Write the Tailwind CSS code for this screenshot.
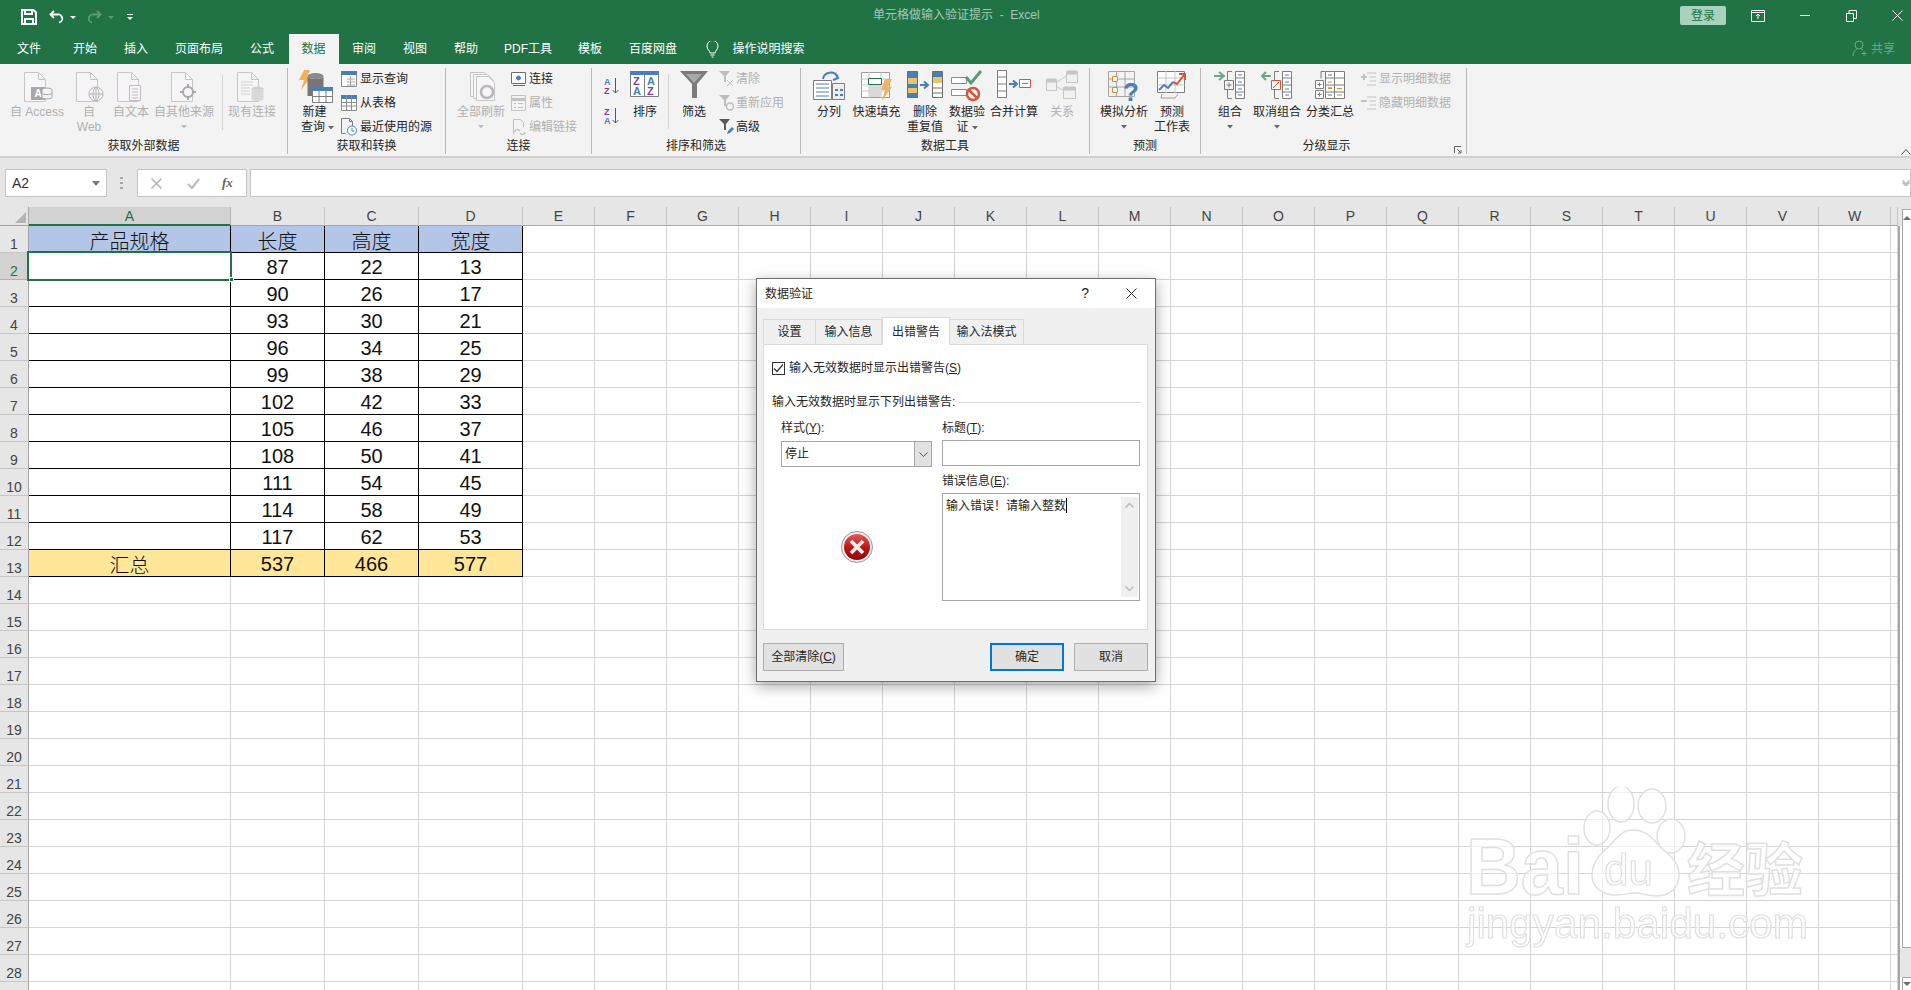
<!DOCTYPE html>
<html lang="zh-CN">
  <head>
    <meta charset="UTF-8" />
    <title>单元格做输入验证提示 - Excel</title>
    <script src="https://cdn.jsdelivr.net/npm/@tailwindcss/browser@4"></script>
  </head>
  <body class="w-[1911px] h-[990px] overflow-hidden bg-white text-[12px] text-[#262626] font-[family-name:'Liberation_Sans','Noto_Sans_CJK_SC',sans-serif]">
    <svg class="hidden">
      <symbol id="doc" viewBox="0 0 24 30"><path d="M.5.5h14l7 7v22H.5z" fill="#f7f5f7" stroke="#c6c6c6"/><path d="M14.5.5v7h7" fill="none" stroke="#c6c6c6"/></symbol>
      <symbol id="caret" viewBox="0 0 6 4"><path d="M0 0h6L3 3.5z" fill="#666"/></symbol>
      <symbol id="caretoff" viewBox="0 0 6 4"><path d="M0 0h6L3 3.5z" fill="#bdbdbd"/></symbol>
    </svg>

    <!-- title bar -->
    <div class="relative h-[34px] bg-[#217346] flex items-center">
      <svg class="ml-[21px] w-[16px] h-[16px]" viewBox="0 0 16 16" fill="none" stroke="#fff" stroke-width="2"><path d="M1 1h11.5L15 3.5V15H1z"/><path d="M4 1v4h7V1M4 15v-5h8v5"/></svg>
      <svg class="ml-[12px] w-[16px] h-[16px]" viewBox="0 0 16 16" fill="none" stroke="#fff" stroke-width="1.8"><path d="M5 2 1.5 5.5 5 9"/><path d="M2 5.5h6.5a4 4 0 0 1 1.5 8"/></svg>
      <div class="ml-[5px] w-0 h-0 border-x-[3px] border-t-[3px] border-x-transparent border-t-white"></div>
      <svg class="ml-[10px] w-[16px] h-[16px]" viewBox="0 0 16 16" fill="none" stroke="#5c9a78" stroke-width="1.8"><path d="M11 2l3.5 3.5L11 9"/><path d="M14 5.5H7.5a4 4 0 0 0-1.500 8"/></svg>
      <div class="ml-[6px] w-0 h-0 border-x-[3px] border-t-[3px] border-x-transparent border-t-[#5c9a78]"></div>
      <svg class="ml-[12px] w-[8px] h-[8px]" viewBox="0 0 8 8"><path d="M1 1h6v1H1zM1 4h6L4 7z" fill="#fff"/></svg>
      <div class="absolute left-[873px] top-[7px] text-[#a5c9b4] whitespace-pre leading-4">单元格做输入验证提示  -  Excel</div>
      <div class="absolute left-[1680px] top-[6px] w-[46px] h-[19px] rounded-[2px] bg-[#a8d2bb] text-[#217346] flex items-center justify-center">登录</div>
      <svg class="absolute left-[1751px] top-[10px] w-[14px] h-[12px]" viewBox="0 0 14 12" fill="none" stroke="#fff"><path d="M.5.5h13v11H.5zM.5 2.500h13M7 9V4.500M5 6l2-2 2 2"/></svg>
      <div class="absolute left-[1800px] top-[15px] w-[10px] h-px bg-white"></div>
      <svg class="absolute left-[1846px] top-[10px] w-[11px] h-[12px]" viewBox="0 0 11 12" fill="none" stroke="#fff"><path d="M.5 3.500h7v8h-7zM3 3.500V.5h7.500v8H7.500"/></svg>
      <svg class="absolute left-[1892px] top-[10px] w-[11px] h-[11px]" viewBox="0 0 11 11" stroke="#fff"><path d="M.5.5l10 10M10.500.5l-10 10"/></svg>
    </div>

    <!-- tabs -->
    <div class="relative h-[30px] bg-[#217346] flex text-white text-[12px]">
      <div class="w-[58px] flex items-center justify-center">文件</div>
      <div class="ml-[1.500px] w-[51px] flex items-center justify-center">开始</div>
      <div class="w-[51px] flex items-center justify-center">插入</div>
      <div class="w-[75px] flex items-center justify-center">页面布局</div>
      <div class="w-[51px] flex items-center justify-center">公式</div>
      <div class="w-[50px] ml-[1px] flex items-center justify-center bg-[#f3f3f3] text-[#217346]">数据</div>
      <div class="w-[51px] flex items-center justify-center">审阅</div>
      <div class="w-[51px] flex items-center justify-center">视图</div>
      <div class="w-[51px] flex items-center justify-center">帮助</div>
      <div class="w-[73px] flex items-center justify-center">PDF工具</div>
      <div class="w-[51px] flex items-center justify-center">模板</div>
      <div class="w-[75px] flex items-center justify-center">百度网盘</div>
      <svg class="ml-[15px] mt-[7px] w-[13px] h-[17px]" viewBox="0 0 13 17" fill="none" stroke="#fff"><path d="M4 12c0-2-3-3.500-3-7a5.500 5.500 0 0 1 11 0c0 3.500-3 5-3 7zM4.500 14h4M5.500 16h2"/></svg>
      <div class="ml-[14px] flex items-center">操作说明搜索</div>
      <svg class="absolute left-[1852px] top-[6px] w-[15px] h-[17px]" viewBox="0 0 15 17" fill="none" stroke="#6ea688"><circle cx="7" cy="5" r="4"/><path d="M1 16c0-4 2-6 4-7M9 9l2 1M12 11v5M9.500 13.500h5"/></svg>
      <div class="absolute left-[1871px] top-[7px] text-[#6ea688] leading-4">共享</div>
    </div>

    <!-- ribbon -->
    <div class="relative h-[94px] bg-[#f3f3f3] border-b-2 border-[#d0d0d0] flex pt-[4px] text-[12px] leading-[15px] whitespace-nowrap">

      <div class="w-[288px] h-[86px] border-r border-[#b9b9b9] pt-[2px] flex flex-col">
        <div class="h-[72px] flex pl-[8px] text-[#b1b1b1]">
          <div class="w-[58px] flex flex-col items-center">
            <div class="h-[35px] w-[32px]"><svg class="w-[32px] h-[32px]" viewBox="0 0 32 32"><use href="#doc" x="3" y="2" width="24" height="30"/><path d="M10 17h14v13H10z" fill="#a8a8a8"/><text x="13.500" y="27" font-size="10" font-weight="700" fill="#fff" font-family="Liberation Sans">A</text><ellipse cx="26" cy="20" rx="5" ry="2" fill="#f3f3f3" stroke="#a8a8a8"/><path d="M21 20v7c0 2.500 10 2.500 10 0v-7" fill="#f3f3f3" stroke="#a8a8a8"/><path d="M21 23c0 2 10 2 10 0" fill="none" stroke="#a8a8a8"/></svg></div>
            <div>自 Access</div>
          </div>
          <div class="w-[46px] flex flex-col items-center">
            <div class="h-[35px] w-[32px]"><svg class="w-[32px] h-[32px]" viewBox="0 0 32 32"><use href="#doc" x="3" y="2" width="24" height="30"/><circle cx="23" cy="24" r="7" fill="#f7f5f7" stroke="#b5b5b5"/><path d="M16 24h14M23 17v14M23 17c-4 3-4 11 0 14M23 17c4 3 4 11 0 14" fill="none" stroke="#b5b5b5"/></svg></div>
            <div class="text-center">自<br />Web</div>
          </div>
          <div class="w-[38px] flex flex-col items-center">
            <div class="h-[35px] w-[32px]"><svg class="w-[32px] h-[32px]" viewBox="0 0 32 32"><use href="#doc" x="2" y="2" width="24" height="30"/><path d="M14.500 15.500h11v15h-11z" fill="#f7f5f7" stroke="#bdbdbd"/><path d="M17 19h6M17 22h6M17 25h6M17 28h6" stroke="#bdbdbd"/></svg></div>
            <div>自文本</div>
          </div>
          <div class="w-[68px] flex flex-col items-center">
            <div class="h-[35px] w-[32px]"><svg class="w-[32px] h-[32px]" viewBox="0 0 32 32"><use href="#doc" x="3" y="2" width="24" height="30"/><circle cx="20" cy="22" r="5" fill="#f7f5f7" stroke="#a8a8a8" stroke-width="2"/><path d="M20 14v4M20 26v4M12 22h4M24 22h4" stroke="#a8a8a8" stroke-width="2"/></svg></div>
            <div>自其他来源</div>
            <svg class="mt-[5px] w-[6px] h-[4px]"><use href="#caretoff"/></svg>
          </div>
          <div class="ml-[4px] mt-[5px] w-px h-[55px] bg-[#d4d4d4]"></div>
          <div class="ml-[5px] w-[48px] flex flex-col items-center">
            <div class="h-[35px] w-[32px]"><svg class="w-[32px] h-[32px]" viewBox="0 0 32 32"><use href="#doc" x="1" y="2" width="24" height="30"/><path d="M5 12h12M5 15h12M5 18h9M5 21h9M5 24h9" stroke="#d0d0d0"/><ellipse cx="21.500" cy="19" rx="6" ry="2.500" fill="#cfcfcf"/><path d="M15.500 19v10c0 2.500 12 2.500 12 0V19" fill="#d9d9d9"/></svg></div>
            <div>现有连接</div>
          </div>
        </div>
        <div class="text-center leading-[15px]">获取外部数据</div>
      </div>

      <div class="w-[158px] h-[86px] border-r border-[#b9b9b9] pt-[2px] flex flex-col">
        <div class="h-[72px] flex">
          <div class="w-[53px] flex flex-col items-center">
            <div class="h-[35px] w-[36px]"><svg class="w-[36px] h-[35px]" viewBox="0 0 36 35"><path d="M7 0h6l-3 7h4L4 20l3-10H2z" fill="#f0b25c"/><ellipse cx="18.500" cy="6" rx="8" ry="3" fill="#8a8a8a"/><path d="M10.500 6v20h16V6c0 4-16 4-16 0z" fill="#767676"/><path d="M15.500 17.500h20v15h-20z" fill="#fff" stroke="#7d7d7d"/><path d="M15 17h21v4H15z" fill="#4a7ebb"/><path d="M15.500 26.500h20M22 21v11M29 21v11" stroke="#7d7d7d"/></svg></div>
            <div>新建</div>
            <div class="flex items-center gap-[3px] ml-[6px]">查询<svg class="w-[6px] h-[4px]"><use href="#caret"/></svg></div>
          </div>
          <div class="flex flex-col gap-2 pt-[1px] text-[#262626]">
            <div class="h-4 flex items-center gap-[3px]"><svg class="w-[16px] h-[16px]" viewBox="0 0 16 16"><path d="M.5.5h15v15H.5z" fill="#fff" stroke="#8c8c8c"/><path d="M0 0h16v4H0z" fill="#4a7ebb"/><path d="M6 8h8M6 11h8M6 14h8M9.500 5v10" stroke="#a6a6a6"/></svg>显示查询</div>
            <div class="h-4 flex items-center gap-[3px]"><svg class="w-[16px] h-[16px]" viewBox="0 0 16 16"><path d="M.5.5h15v15H.5z" fill="#fff" stroke="#8c8c8c"/><path d="M0 0h16v4H0z" fill="#4a7ebb"/><path d="M.5 7.500h15M.5 11h15M5.500 0v16M10.500 0v16" stroke="#8c8c8c"/></svg>从表格</div>
            <div class="h-4 flex items-center gap-[3px]"><svg class="w-[16px] h-[18px]" viewBox="0 0 16 18"><path d="M.5.500h8l3 3V9" fill="none" stroke="#7d7d7d"/><path d="M.5.5v15h4" fill="none" stroke="#7d7d7d"/><path d="M8.500.5v3h3" fill="none" stroke="#7d7d7d"/><circle cx="11" cy="12.500" r="4.500" fill="#fff" stroke="#4a7ebb"/><path d="M11 10v3h2.500" fill="none" stroke="#4a7ebb"/></svg>最近使用的源</div>
          </div>
        </div>
        <div class="text-center leading-[15px]">获取和转换</div>
      </div>

      <div class="w-[146px] h-[86px] border-r border-[#b9b9b9] pt-[2px] flex flex-col">
        <div class="h-[72px] flex pl-[5px]">
          <div class="w-[60px] flex flex-col items-center text-[#b1b1b1]">
            <div class="h-[35px] w-[32px]"><svg class="w-[32px] h-[32px]" viewBox="0 0 32 32" fill="#f7f5f7" stroke="#c6c6c6"><path d="M5.500 2.500h14l6 6v18h-20z"/><path d="M8.500 4.500h14l6 6v18h-20z" /><path d="M11.500 6.500h12l6 6v18h-18z"/><circle cx="22" cy="22" r="6" fill="none" stroke="#b8b8b8" stroke-width="2.500"/></svg></div>
            <div>全部刷新</div>
            <svg class="mt-[5px] w-[6px] h-[4px]"><use href="#caretoff"/></svg>
          </div>
          <div class="flex flex-col gap-2 pt-[1px]">
            <div class="h-4 flex items-center gap-[2px]"><svg class="w-[16px] h-[15px]" viewBox="0 0 16 15" fill="none" stroke="#6d6d6d"><path d="M.5.5h14v11H.5z" fill="#fff"/><path d="M2 13.500h12"/><circle cx="7.500" cy="6" r="2" fill="#4a7ebb" stroke="#4a7ebb"/></svg>连接</div>
            <div class="h-4 flex items-center gap-[2px] text-[#b1b1b1]"><svg class="w-[16px] h-[16px]" viewBox="0 0 16 16" fill="none" stroke="#c2c2c2"><path d="M.5.5h14v15H.5z"/><path d="M.5 4.500h14" stroke-width="3"/><path d="M3 8.500h2M3 12.500h2M7 8.500h5M7 12.500h5"/></svg>属性</div>
            <div class="h-4 flex items-center gap-[2px] text-[#b1b1b1]"><svg class="w-[16px] h-[17px]" viewBox="0 0 16 17" fill="none" stroke="#c2c2c2"><path d="M2.500.5h7l3 3v5M2.500.5v15"/><path d="M4 13c0-3 4-3 5-1M14 13c0 3-4 3-5 1" stroke-width="1.500"/></svg>编辑链接</div>
          </div>
        </div>
        <div class="text-center leading-[15px]">连接</div>
      </div>

      <div class="w-[209px] h-[86px] border-r border-[#b9b9b9] pt-[2px] flex flex-col">
        <div class="h-[72px] flex pl-[12px]">
          <div class="w-[18px] flex flex-col gap-[12px] pt-[7px]">
            <svg class="w-[16px] h-[18px]" viewBox="0 0 16 18"><text x="0" y="8" font-size="9" font-weight="700" fill="#4a7ebb" font-family="Liberation Sans">A</text><text x="0" y="17" font-size="9" font-weight="700" fill="#7a3fa5" font-family="Liberation Sans">Z</text><path d="M11.500 1v15M8.500 13l3 3 3-3" fill="none" stroke="#555"/></svg>
            <svg class="w-[16px] h-[18px]" viewBox="0 0 16 18"><text x="0" y="8" font-size="9" font-weight="700" fill="#7a3fa5" font-family="Liberation Sans">Z</text><text x="0" y="17" font-size="9" font-weight="700" fill="#4a7ebb" font-family="Liberation Sans">A</text><path d="M11.500 1v15M8.500 13l3 3 3-3" fill="none" stroke="#555"/></svg>
          </div>
          <div class="w-[46px] flex flex-col items-center">
            <div class="h-[35px] w-[30px]"><svg class="w-[30px] h-[26px] mt-[1px]" viewBox="0 0 30 26"><path d="M.5.5h28v25H.5z" fill="#fff" stroke="#7d7d7d"/><path d="M0 0h29v4H0z" fill="#4a7ebb"/><path d="M14.500 4v22" stroke="#7d7d7d"/><text x="3" y="14" font-size="11" font-weight="700" fill="#7a3fa5" font-family="Liberation Sans">Z</text><text x="3" y="24" font-size="11" font-weight="700" fill="#4a7ebb" font-family="Liberation Sans">A</text><text x="17" y="14" font-size="11" font-weight="700" fill="#4a7ebb" font-family="Liberation Sans">A</text><text x="17" y="24" font-size="11" font-weight="700" fill="#7a3fa5" font-family="Liberation Sans">Z</text></svg></div>
            <div>排序</div>
          </div>
          <div class="mt-[4px] w-px h-[55px] bg-[#d4d4d4]"></div>
          <div class="w-[50px] flex flex-col items-center">
            <div class="h-[35px] w-[28px]"><svg class="w-[28px] h-[28px] mt-[1px]" viewBox="0 0 28 28"><path d="M0 0h28L17 13v14h-5V13z" fill="#7b7b7b"/><path d="M6 3h16l-8 9z" fill="#a9a9a9"/></svg></div>
            <div>筛选</div>
          </div>
          <div class="flex flex-col gap-2 pt-[1px]">
            <div class="h-4 flex items-center gap-[2px] text-[#b1b1b1]"><svg class="w-[15px] h-[16px]" viewBox="0 0 15 16"><path d="M0 0h11L7 5v6H5V5z" fill="#bdbdbd"/><path d="M8 9l6 6M14 9l-6 6" stroke="#bdbdbd"/></svg>清除</div>
            <div class="h-4 flex items-center gap-[2px] text-[#b1b1b1]"><svg class="w-[15px] h-[16px]" viewBox="0 0 15 16"><path d="M0 0h11L7 5v6H5V5z" fill="#bdbdbd"/><circle cx="11" cy="11.500" r="3.500" fill="none" stroke="#bdbdbd" stroke-width="1.500"/></svg>重新应用</div>
            <div class="h-4 flex items-center gap-[2px]"><svg class="w-[15px] h-[16px]" viewBox="0 0 15 16"><path d="M0 0h11L7 5v6H5V5z" fill="#595959"/><path d="M8 15l1-3 4-4 2 2-4 4z" fill="#4a7ebb"/></svg>高级</div>
          </div>
        </div>
        <div class="text-center leading-[15px]">排序和筛选</div>
      </div>

      <div class="w-[289px] h-[86px] border-r border-[#b9b9b9] pt-[2px] flex flex-col">
        <div class="h-[72px] flex pl-[4px]">
          <div class="w-[48px] flex flex-col items-center">
            <div class="h-[35px] w-[32px]"><svg class="w-[32px] h-[32px]" viewBox="0 0 32 32" fill="none"><path d="M.5 10.500h18v19H.5z" fill="#fff" stroke="#7d7d7d"/><path d="M3 14h13M3 18h13M3 22h13M3 26h13" stroke="#4a7ebb"/><path d="M19.500 13.500h12v16h-12z" fill="#eee" stroke="#7d7d7d"/><path d="M22 20h3M27 20h3M22 25h3M27 25h3" stroke="#4a7ebb" stroke-width="2"/><path d="M10 9c1-7 11-9 15-2M22 3l3 5-5 2" stroke="#4a7ebb" stroke-width="2"/></svg></div>
            <div>分列</div>
          </div>
          <div class="w-[47px] flex flex-col items-center">
            <div class="h-[35px] w-[32px]"><svg class="w-[32px] h-[32px]" viewBox="0 0 32 32" fill="none"><path d="M.5 2.500h28v25H.5z" fill="#fff" stroke="#9d9d9d"/><path d="M.5 9h28M.5 15h28M.5 21h28M8 2v26M20 2v26" stroke="#c6c6c6"/><path d="M7.500 8.500h13v6h-13z" stroke="#217346" fill="#fff"/><path d="M8 15h12v12H8z" fill="#d9d9d9"/><path d="M24 9h7l-4 8h4L21 31l3-11h-4z" fill="#f0b25c"/></svg></div>
            <div>快速填充</div>
          </div>
          <div class="w-[50px] flex flex-col items-center">
            <div class="h-[35px] w-[36px]"><svg class="w-[36px] h-[32px]" viewBox="0 0 36 32"><path d="M.5 1.500h10v26H.5zM25.500 1.500h10v26h-10z" fill="#4a7ebb" stroke="#6d6d6d"/><path d="M1 8h9v6H1zM1 18h9v5H1z" fill="#e9c46a"/><path d="M26 7h9v6h-9z" fill="#e9c46a"/><path d="M26 13h9v14h-9z" fill="#fff"/><path d="M26 18h9M26 23h9" stroke="#6d6d6d"/><path d="M13 15h7M17 11.500l4 3.500-4 3.500" fill="none" stroke="#4a7ebb" stroke-width="2"/></svg></div>
            <div>删除</div>
            <div>重复值</div>
          </div>
          <div class="w-[34px] flex flex-col items-center">
            <div class="h-[35px] w-[32px]"><svg class="w-[32px] h-[32px]" viewBox="0 0 32 32" fill="none"><path d="M.5 7.500h15v6H.5zM.5 19.500h15v6H.5z" fill="#fff" stroke="#8c8c8c"/><path d="M15 7l5 6L30 1" stroke="#5c9a78" stroke-width="3"/><circle cx="22" cy="24" r="6" stroke="#d6573b" stroke-width="2.500" fill="#fff"/><path d="M18 20l8 8" stroke="#d6573b" stroke-width="2.500"/></svg></div>
            <div>数据验</div>
            <div class="flex items-center gap-[3px]">证<svg class="w-[6px] h-[4px]"><use href="#caret"/></svg></div>
          </div>
          <div class="w-[60px] flex flex-col items-center">
            <div class="h-[35px] w-[34px]"><svg class="w-[34px] h-[28px]" viewBox="0 0 34 28" fill="none"><path d="M.5.5h9v27h-9z" fill="#fff" stroke="#7d7d7d"/><path d="M.5 7h9M.5 14h9M.5 21h9" stroke="#7d7d7d"/><path d="M12 14h7M16 10.500l4 3.500-4 3.500" stroke="#4a7ebb" stroke-width="2"/><path d="M22.500 9.500h11v8h-11z" fill="#fff" stroke="#d6573b"/><path d="M25 13.500h6" stroke="#d6573b"/></svg></div>
            <div>合并计算</div>
          </div>
          <div class="w-[36px] flex flex-col items-center text-[#b1b1b1]">
            <div class="h-[35px] w-[32px]"><svg class="w-[32px] h-[29px]" viewBox="0 0 32 29" fill="none" stroke="#c6c6c6"><path d="M.5 9.500h10v11H.5zM20.500 1.500h11v11h-11zM17.500 17.500h12v11h-12z" fill="#f0f0f0"/><path d="M11 12l9-6M11 17l6 3"/><path d="M1 9h9v3H1zM21 1h10v3H21zM18 17h11v3H18z" fill="#c6c6c6"/></svg></div>
            <div>关系</div>
          </div>
        </div>
        <div class="text-center leading-[15px]">数据工具</div>
      </div>

      <div class="w-[111px] h-[86px] border-r border-[#b9b9b9] pt-[2px] flex flex-col">
        <div class="h-[72px] flex pl-[7px]">
          <div class="w-[54px] flex flex-col items-center">
            <div class="h-[35px] w-[32px]"><svg class="w-[32px] h-[32px]" viewBox="0 0 32 32" fill="none"><path d="M.5 1.500h26v25H.5zM.5 9h26M.5 17h26M8.500 1v26M17 1v26" stroke="#a6a6a6" /><path d="M4.500 6.500h5v5h-5zM4.500 17.500h5v5h-5z" stroke="#e08a2e" fill="#fff"/><text x="15" y="31" font-size="26" font-weight="700" fill="#4a7ebb" font-family="Liberation Sans">?</text></svg></div>
            <div>模拟分析</div>
            <svg class="mt-[5px] w-[6px] h-[4px]"><use href="#caret"/></svg>
          </div>
          <div class="w-[42px] flex flex-col items-center">
            <div class="h-[35px] w-[30px]"><svg class="w-[30px] h-[30px]" viewBox="0 0 30 30" fill="none"><path d="M.5 1.500h27v21H.5z" fill="#fff" stroke="#7d7d7d"/><path d="M.5 8h27M.5 15h27M9 1v22M18 1v22" stroke="#c6c6c6"/><path d="M2 20l5-5 4 3 5-6" stroke="#4a7ebb" stroke-width="2"/><path d="M16 12l4 2 7-9M22 4h6v6" stroke="#d6573b" stroke-width="2"/><path d="M5 24l-1 4h14l3-4" stroke="#9d9d9d"/></svg></div>
            <div>预测</div>
            <div>工作表</div>
          </div>
        </div>
        <div class="text-center leading-[15px]">预测</div>
      </div>

      <div class="relative w-[266px] h-[86px] border-r border-[#b9b9b9] pt-[2px] flex flex-col">
        <div class="h-[72px] flex pl-[4px]">
          <div class="w-[50px] flex flex-col items-center">
            <div class="h-[35px] w-[32px]"><svg class="w-[32px] h-[30px]" viewBox="0 0 32 30" fill="none"><path d="M0 6h8M5 2l5 4-5 4" stroke="#6aa88a" stroke-width="2"/><path d="M21.500 1.500h9v27h-9zM21.500 8h9M21.500 15h9M21.500 22h9" stroke="#7d7d7d" fill="#fff"/><path d="M24 5h4M24 12h4M24 19h4M24 25h4" stroke="#4a7ebb"/><path d="M13.500 1.500H18M13.500 1.500v9M13.500 28.500H18M13.500 19v9" stroke="#7d7d7d"/><path d="M10.500 10.500h9v9h-9z" stroke="#7d7d7d"/><path d="M12.500 15h5M15 12.500v5" stroke="#7d7d7d"/></svg></div>
            <div>组合</div>
            <svg class="mt-[5px] w-[6px] h-[4px]"><use href="#caret"/></svg>
          </div>
          <div class="w-[44px] flex flex-col items-center">
            <div class="h-[35px] w-[32px]"><svg class="w-[32px] h-[30px]" viewBox="0 0 32 30" fill="none"><path d="M10 6H2M5 2L1 6l4 4" stroke="#6aa88a" stroke-width="2"/><path d="M21.500 1.500h9v27h-9zM21.500 8h9M21.500 15h9M21.500 22h9" stroke="#7d7d7d" fill="#fff"/><path d="M24 5h4M24 12h4M24 19h4M24 25h4" stroke="#4a7ebb"/><path d="M13.500 1.500H18M13.500 1.500v9M13.500 28.500H18M13.500 19v9" stroke="#7d7d7d"/><path d="M10.500 10.500h9v9h-9z" stroke="#d6573b" fill="#fff"/><path d="M12 18l6-6" stroke="#d6573b"/></svg></div>
            <div>取消组合</div>
            <svg class="mt-[5px] w-[6px] h-[4px]"><use href="#caret"/></svg>
          </div>
          <div class="w-[62px] flex flex-col items-center">
            <div class="h-[35px] w-[30px]"><svg class="w-[30px] h-[30px]" viewBox="0 0 30 30" fill="none"><path d="M10.500 1.500h19v27h-19zM10.500 8h19M10.500 15h19M10.500 22h19M19.500 1v28" stroke="#7d7d7d" fill="#fff"/><path d="M13 5h4M13 18h4M13 25h4" stroke="#4a7ebb"/><path d="M13 12h4M22 18.500h5M13 18.500h4M22 25h5" stroke="#e08a2e"/><path d="M6 1.500h4M6 1.500v7" stroke="#7d7d7d"/><path d="M.5 10.500h8v8h-8zM.5 20.500h8v8h-8z" stroke="#7d7d7d" fill="#fff"/><path d="M2.500 14.500h4M4.500 12.500v4M2.500 24.500h4M4.500 22.500v4" stroke="#7d7d7d"/></svg></div>
            <div>分类汇总</div>
          </div>
          <div class="flex flex-col gap-2 pt-[1px] text-[#b1b1b1]">
            <div class="h-4 flex items-center gap-[3px]"><svg class="w-[15px] h-[15px]" viewBox="0 0 15 15" fill="none" stroke="#c2c2c2"><path d="M6 1h9M9 5h6M9 9h6M6 13h9"/><path d="M0 5h6M3 2v6" stroke-width="2"/></svg>显示明细数据</div>
            <div class="h-4 flex items-center gap-[3px]"><svg class="w-[15px] h-[15px]" viewBox="0 0 15 15" fill="none" stroke="#c2c2c2"><path d="M6 1h9M9 5h6M9 9h6M6 13h9"/><path d="M0 5h6" stroke-width="2"/></svg>隐藏明细数据</div>
          </div>
        </div>
        <div class="pr-[14px] text-center leading-[15px]">分级显示</div>
        <svg class="absolute right-[4px] bottom-[0px] w-[8px] h-[8px]" viewBox="0 0 8 8" fill="none" stroke="#666"><path d="M.5 7V.5H7M3 3l4 4M7 4v3H4"/></svg>
      </div>

      <svg class="absolute left-[1901px] top-[85px] w-[10px] h-[6px]" viewBox="0 0 10 6" fill="none" stroke="#555"><path d="M.5 5.500l4.500-5 4.500 5"/></svg>
    </div>

    <!-- formula bar -->
    <div class="h-[49px] bg-[#e6e6e6] flex pt-[11px]">
      <div class="ml-[5px] w-[102px] h-[28px] bg-white border border-[#c6c6c6] flex items-center pl-[6px] text-[14px] text-[#333] relative">A2<div class="absolute right-[6px] top-[11px] w-0 h-0 border-x-[4px] border-t-[5px] border-x-transparent border-t-[#7a7a7a]"></div></div>
      <div class="ml-[13px] w-[3px] h-[28px] flex flex-col justify-center gap-[3px]"><div class="h-[2px] bg-[#a6a6a6]"></div><div class="h-[2px] bg-[#a6a6a6]"></div><div class="h-[2px] bg-[#a6a6a6]"></div></div>
      <div class="ml-[14px] w-[110px] h-[28px] bg-white border border-[#c6c6c6] flex items-center">
        <svg class="ml-[13px] w-[11px] h-[11px]" viewBox="0 0 11 11" stroke="#bdbdbd" stroke-width="1.800"><path d="M.5.5l10 10M10.500.5l-10 10"/></svg>
        <svg class="ml-[25px] w-[13px] h-[11px]" viewBox="0 0 13 11" fill="none" stroke="#bdbdbd" stroke-width="2.200"><path d="M1 6l4 4 7-9"/></svg>
        <span class="ml-[22px] text-[13px] italic font-bold text-[#666] font-[family-name:'Liberation_Serif',serif]">fx</span>
      </div>
      <div class="relative ml-[3px] w-[1661px] h-[28px] bg-white border border-[#c6c6c6]">
        <svg class="absolute right-[0px] top-[10px] w-[8px] h-[6px]" viewBox="0 0 8 6" fill="none" stroke="#bdbdbd" stroke-width="1.500"><path d="M.5.5 4 4 7.500.5M.5 2.500 4 6l3.500-3.500"/></svg>
      </div>
    </div>

    <!-- sheet -->
    <div class="relative h-[783px] flex overflow-hidden">
      <div id="grid" class="w-[1898px] grid grid-cols-[29px_202px_94px_94px_104px_repeat(19,72px)_7px] grid-rows-[19px_repeat(29,27px)] text-[#111]"></div>
      <div class="w-[13px] flex flex-col">
        <div class="h-[19px] bg-[#e6e6e6] pl-[4px] pt-[2px] flex"><div class="w-[9px] h-[17px] bg-white border-l border-t border-[#a6a6a6] flex items-center justify-center"><div class="w-0 h-0 border-x-[4px] border-b-[4px] border-x-transparent border-b-[#6d6d6d]"></div></div></div>
        <div class="h-[722px] border-l-2 border-[#a6a6a6] pl-[2px] bg-white flex"><div class="w-full border-l border-b border-[#a6a6a6]"></div></div>
        <div class="h-[29px] bg-[#e6e6e6] border-l-2 border-[#a6a6a6]"></div>
        <div class="h-[13px] bg-white border-l-2 border-[#a6a6a6] pl-[2px]"><div class="h-full border-l border-t border-[#a6a6a6] flex items-center justify-center"><div class="w-0 h-0 border-x-[4px] border-t-[4px] border-x-transparent border-t-[#6d6d6d]"></div></div></div>
      </div>

      <!-- selection -->
      <div class="absolute left-[27px] top-[44px] w-[205px] h-[30px] border-2 border-[#217346]"></div>
      <div class="absolute left-[229px] top-[70px] w-[5px] h-[5px] bg-[#217346] border border-white"></div>

      <!-- watermark -->
      <svg class="absolute left-[1450px] top-[580px] w-[370px] h-[190px] blur-[0.5px]" viewBox="0 0 370 190" stroke="#e0e0e0" fill="#ffffff" fill-opacity="0.65" font-family="Liberation Sans">
        <text x="16" y="107" font-size="80" font-weight="700" textLength="118" lengthAdjust="spacingAndGlyphs" stroke-width="1.500">Bai</text>
        <ellipse cx="147" cy="41" rx="13" ry="17" stroke-width="1.500"/>
        <ellipse cx="171" cy="17" rx="13" ry="18" stroke-width="1.500"/>
        <ellipse cx="202" cy="19" rx="14" ry="17" stroke-width="1.500"/>
        <ellipse cx="221" cy="49" rx="14" ry="17" stroke-width="1.500"/>
        <path d="M183 43c-14 0-18 12-28 20-9 8-13 15-13 25 0 13 11 20 24 20 10 0 12-2 19-2s11 3 21 3c14 0 23-8 23-21 0-11-6-17-14-24-10-8-16-21-32-21z" stroke-width="1.500"/>
        <text x="154" y="98" font-size="44" font-weight="400" fill-opacity="0" stroke-width="1.200">du</text>
        <text x="237" y="104" font-size="58" font-weight="700" font-family="Noto Sans CJK SC" stroke-width="1.500">经验</text>
        <text x="17" y="151" font-size="42.300" fill-opacity="0.5" stroke-width="1.200">jingyan.baidu.com</text>
      </svg>

      <!-- dialog -->
      <div class="absolute left-[756px] top-[71px] w-[400px] h-[404px] bg-[#f0f0f0] border border-[#6e6e6e] shadow-[0_4px_14px_rgba(0,0,0,0.35)] flex flex-col">
        <div class="h-[29px] bg-white flex items-center pl-[8px] shrink-0">
          <span>数据验证</span>
          <span class="ml-auto mr-[37px] text-[14px]">?</span>
          <svg class="mr-[18px] w-[11px] h-[11px]" viewBox="0 0 11 11" stroke="#333"><path d="M.5.5l10 10M10.500.5l-10 10"/></svg>
        </div>
        <div class="h-[36px] flex items-end pl-[6px] shrink-0">
          <div class="w-[53px] h-[25px] bg-[#f0f0f0] border border-b-0 border-[#d9d9d9] flex items-center justify-center">设置</div>
          <div class="w-[66px] h-[25px] bg-[#f0f0f0] border-t border-r border-[#d9d9d9] flex items-center justify-center">输入信息</div>
          <div class="w-[68px] h-[28px] -mb-px z-10 bg-white border border-b-0 border-[#d9d9d9] flex items-center justify-center">出错警告</div>
          <div class="w-[74px] h-[25px] bg-[#f0f0f0] border-t border-r border-[#d9d9d9] flex items-center justify-center">输入法模式</div>
        </div>
        <div class="ml-[6px] w-[385px] h-[286px] bg-white border border-[#d9d9d9] pt-[15px] pl-[8px] pr-[6px] shrink-0">
          <div class="h-4 flex items-center">
            <div class="w-[13px] h-[13px] bg-white border border-[#333] flex items-center justify-center"><svg class="w-[11px] h-[9px]" viewBox="0 0 11 9" fill="none" stroke="#333" stroke-width="1.200"><path d="M1 4.500l3 3 6-7"/></svg></div>
            <span class="ml-[4px]">输入无效数据时显示出错警告(<span class="underline">S</span>)</span>
          </div>
          <div class="mt-[18px] h-4 flex items-center">
            <span class="whitespace-nowrap">输入无效数据时显示下列出错警告:</span>
            <div class="ml-[4px] flex-1 h-px bg-[#d9d9d9]"></div>
          </div>
          <div class="mt-[10px] flex pl-[9px]">
            <div class="w-[151px] flex flex-col">
              <div class="h-4 leading-4">样式(<span class="underline">Y</span>):</div>
              <div class="mt-[5px] h-[26px] border border-[#a6a6a6] flex items-center pl-[3px]">
                <span>停止</span>
                <div class="ml-auto w-[17px] h-full bg-[#e1e1e1] border-l border-[#a6a6a6] flex items-center justify-center"><svg class="w-[9px] h-[5px]" viewBox="0 0 9 5" fill="none" stroke="#555"><path d="M.5.5l4 4 4-4"/></svg></div>
              </div>
              <svg class="mt-[64px] ml-[60px] w-[32px] h-[32px]" viewBox="0 0 32 32">
                <defs><linearGradient id="err" x1="0" y1="0" x2="0" y2="1"><stop offset="0" stop-color="#e25a5a"/><stop offset="0.5" stop-color="#c01818"/><stop offset="1" stop-color="#8c0606"/></linearGradient></defs>
                <circle cx="16" cy="16" r="15.500" fill="#eee" stroke="#9a9a9a"/>
                <circle cx="16" cy="16" r="13" fill="url(#err)"/>
                <path d="M10 10l12 12M22 10L10 22" stroke="#eee" stroke-width="3.800"/>
              </svg>
            </div>
            <div class="ml-[10px] w-[198px] flex flex-col">
              <div class="h-4 leading-4">标题(<span class="underline">T</span>):</div>
              <div class="mt-[4px] h-[26px] border border-[#a6a6a6]"></div>
              <div class="mt-[7px] h-4 leading-4">错误信息(<span class="underline">E</span>):</div>
              <div class="mt-[4px] h-[108px] border border-[#a6a6a6] flex pl-[3px] pt-[4px]">
                <div class="flex-1 h-4 leading-4 flex">输入错误！请输入整数<div class="w-px h-[15px] bg-black"></div></div>
                <div class="w-[17px] h-[100px] bg-[#f0f0f0] mr-[1px] -mt-[1px] flex flex-col items-center justify-between py-[6px]">
                  <svg class="w-[9px] h-[5px]" viewBox="0 0 9 5" fill="none" stroke="#bdbdbd" stroke-width="1.500"><path d="M.5 4.500l4-4 4 4"/></svg>
                  <svg class="w-[9px] h-[5px]" viewBox="0 0 9 5" fill="none" stroke="#bdbdbd" stroke-width="1.500"><path d="M.5.5l4 4 4-4"/></svg>
                </div>
              </div>
            </div>
          </div>
        </div>
        <div class="mt-[13px] flex pl-[6px] pr-[7px] h-[28px] shrink-0">
          <div class="w-[81px] bg-[#e1e1e1] border border-[#adadad] flex items-center justify-center">全部清除(<span class="underline">C</span>)</div>
          <div class="ml-auto w-[74px] bg-[#e1e1e1] border-2 border-[#0078d7] flex items-center justify-center">确定</div>
          <div class="ml-[10px] w-[74px] bg-[#e1e1e1] border border-[#adadad] flex items-center justify-center">取消</div>
        </div>
      </div>
    </div>

    <script>
      var letters = "ABCDEFGHIJKLMNOPQRSTUVW ";
      var data = {
        1: ["产品规格", "长度", "高度", "宽度"],
        2: ["", 87, 22, 13],
        3: ["", 90, 26, 17],
        4: ["", 93, 30, 21],
        5: ["", 96, 34, 25],
        6: ["", 99, 38, 29],
        7: ["", 102, 42, 33],
        8: ["", 105, 46, 37],
        9: ["", 108, 50, 41],
        10: ["", 111, 54, 45],
        11: ["", 114, 58, 49],
        12: ["", 117, 62, 53],
        13: ["汇总", 537, 466, 577],
      };
      var html = '<div class="relative bg-[#e6e6e6] border-r border-b border-[#a6a6a6]"><div class="absolute right-[2px] bottom-[2px] w-0 h-0 border-b-[11px] border-l-[11px] border-b-[#b4b4b4] border-l-transparent"></div></div>';
      for (var c = 0; c < letters.length; c++) {
        if (c === 0) {
          html += '<div class="bg-[#d2d2d2] border-r border-[#b0b0b0] border-b-2 border-b-[#217346] text-[14px] text-[#217346] flex items-center justify-center leading-none">A</div>';
        } else {
          html += '<div class="bg-[#e6e6e6] border-r border-[#c6c6c6] border-b border-b-[#a6a6a6] text-[14px] text-[#444] flex items-center justify-center leading-none">' + letters[c] + "</div>";
        }
      }
      for (var r = 1; r <= 29; r++) {
        if (r === 2) {
          html += '<div class="bg-[#d2d2d2] border-r border-[#a6a6a6] border-b border-b-[#b0b0b0] text-[14px] text-[#217346] flex items-end justify-center leading-none pb-[1px]">2</div>';
        } else if (r === 29) {
          html += '<div class="bg-[#e6e6e6] border-r border-[#a6a6a6]"></div>';
        } else {
          html += '<div class="bg-[#e6e6e6] border-r border-[#a6a6a6] border-b border-b-[#c6c6c6] text-[14px] text-[#444] flex items-end justify-center leading-none pb-[1px]">' + r + "</div>";
        }
        for (var c = 0; c < letters.length; c++) {
          var row = data[r];
          if (row && c < 4) {
            var val = row[c];
            var cls = "border-r border-b border-black flex items-end justify-center leading-none font-light text-[20px] ";
            if (r === 1) cls += "bg-[#b4c6e7]";
            else if (r === 13) cls += c === 0 ? "bg-[#ffe699]" : "bg-[#ffe699] pb-[2px]";
            else cls += "bg-white pb-[2px]";
            html += '<div class="' + cls + '">' + val + "</div>";
          } else {
            html += '<div class="border-r border-b border-[#d4d4d4]"></div>';
          }
        }
      }
      document.getElementById("grid").innerHTML = html;
    </script>
  </body>
</html>
